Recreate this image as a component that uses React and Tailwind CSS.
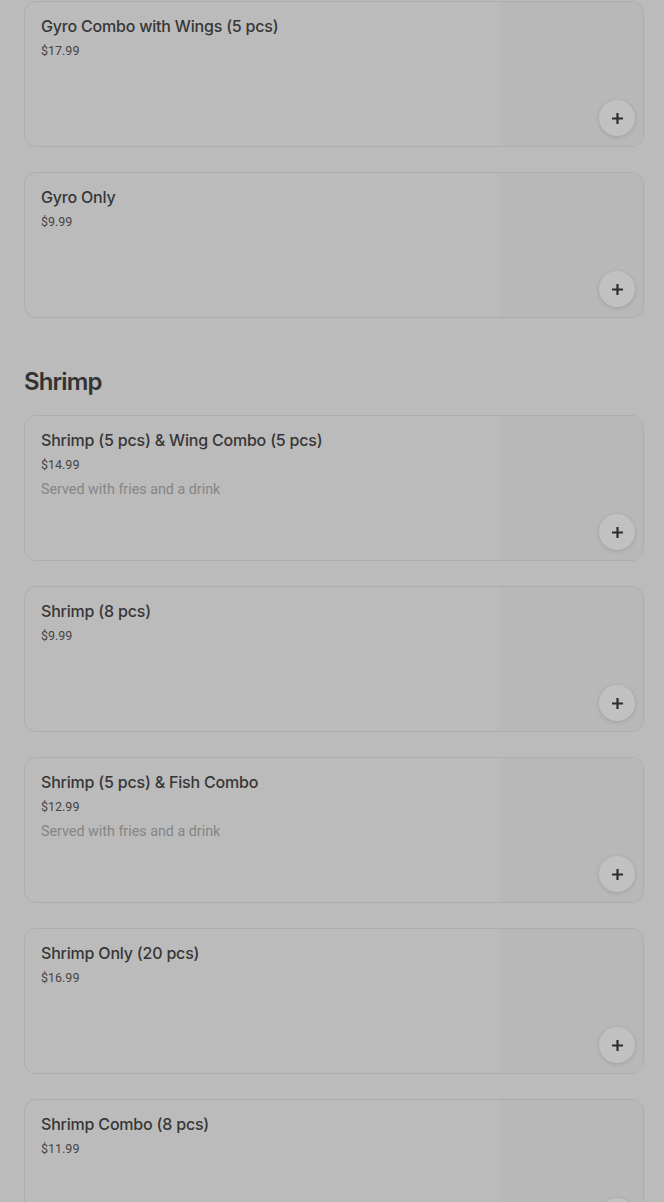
import React from "react";

const gyro = [
  { name: "Gyro Combo with Wings (5 pcs)", price: "$17.99" },
  { name: "Gyro Only", price: "$9.99" },
];

const shrimp = [
  { name: "Shrimp (5 pcs) & Wing Combo (5 pcs)", price: "$14.99", desc: "Served with fries and a drink" },
  { name: "Shrimp (8 pcs)", price: "$9.99" },
  { name: "Shrimp (5 pcs) & Fish Combo", price: "$12.99", desc: "Served with fries and a drink" },
  { name: "Shrimp Only (20 pcs)", price: "$16.99" },
  { name: "Shrimp Combo (8 pcs)", price: "$11.99" },
];

function Card({ item }) {
  return (
    <div className="relative flex h-[146px] shrink-0 overflow-hidden rounded-xl border border-[#adadad] bg-[#bbbbbb]">
      <div className="flex min-w-0 flex-1 flex-col pl-4 pt-3">
        <div
          className="text-[16px] font-medium leading-6 tracking-[-0.2px] text-[#363636]"
          style={{ fontFamily: "Inter, sans-serif" }}
        >
          {item.name}
        </div>
        <div className="mt-px text-[12.5px] leading-6 text-[#454545]">{item.price}</div>
        {item.desc && <div className="text-[14.3px] leading-6 text-[#858585]">{item.desc}</div>}
      </div>
      <div className="w-[143px] shrink-0 bg-[#b8b8b8]" />
      <button className="absolute bottom-[10px] right-2 flex h-9 w-9 items-center justify-center rounded-full bg-[#c1c1c1] shadow-[0_1px_4px_rgba(0,0,0,0.14)]">
        <svg width="13" height="13" viewBox="0 0 13 13">
          <path d="M6.5 1v11M1 6.5h11" stroke="#2e2e2e" strokeWidth="2.2" />
        </svg>
      </button>
    </div>
  );
}

export default function App() {
  return (
    <div
      className="min-h-[1202px] bg-[#bbbbbb] pl-6 pr-5 pt-px"
      style={{ fontFamily: "Roboto, 'Liberation Sans', sans-serif" }}
    >
      <div className="flex flex-col gap-[25px]">
        {gyro.map((it) => (
          <Card key={it.name} item={it} />
        ))}
      </div>
      <h2
        className="mb-[17px] mt-12 text-[24px] font-semibold leading-8 tracking-[-0.9px] text-[#333333]"
        style={{ fontFamily: "Inter, sans-serif" }}
      >
        Shrimp
      </h2>
      <div className="flex flex-col gap-[25px]">
        {shrimp.map((it) => (
          <Card key={it.name} item={it} />
        ))}
      </div>
    </div>
  );
}
